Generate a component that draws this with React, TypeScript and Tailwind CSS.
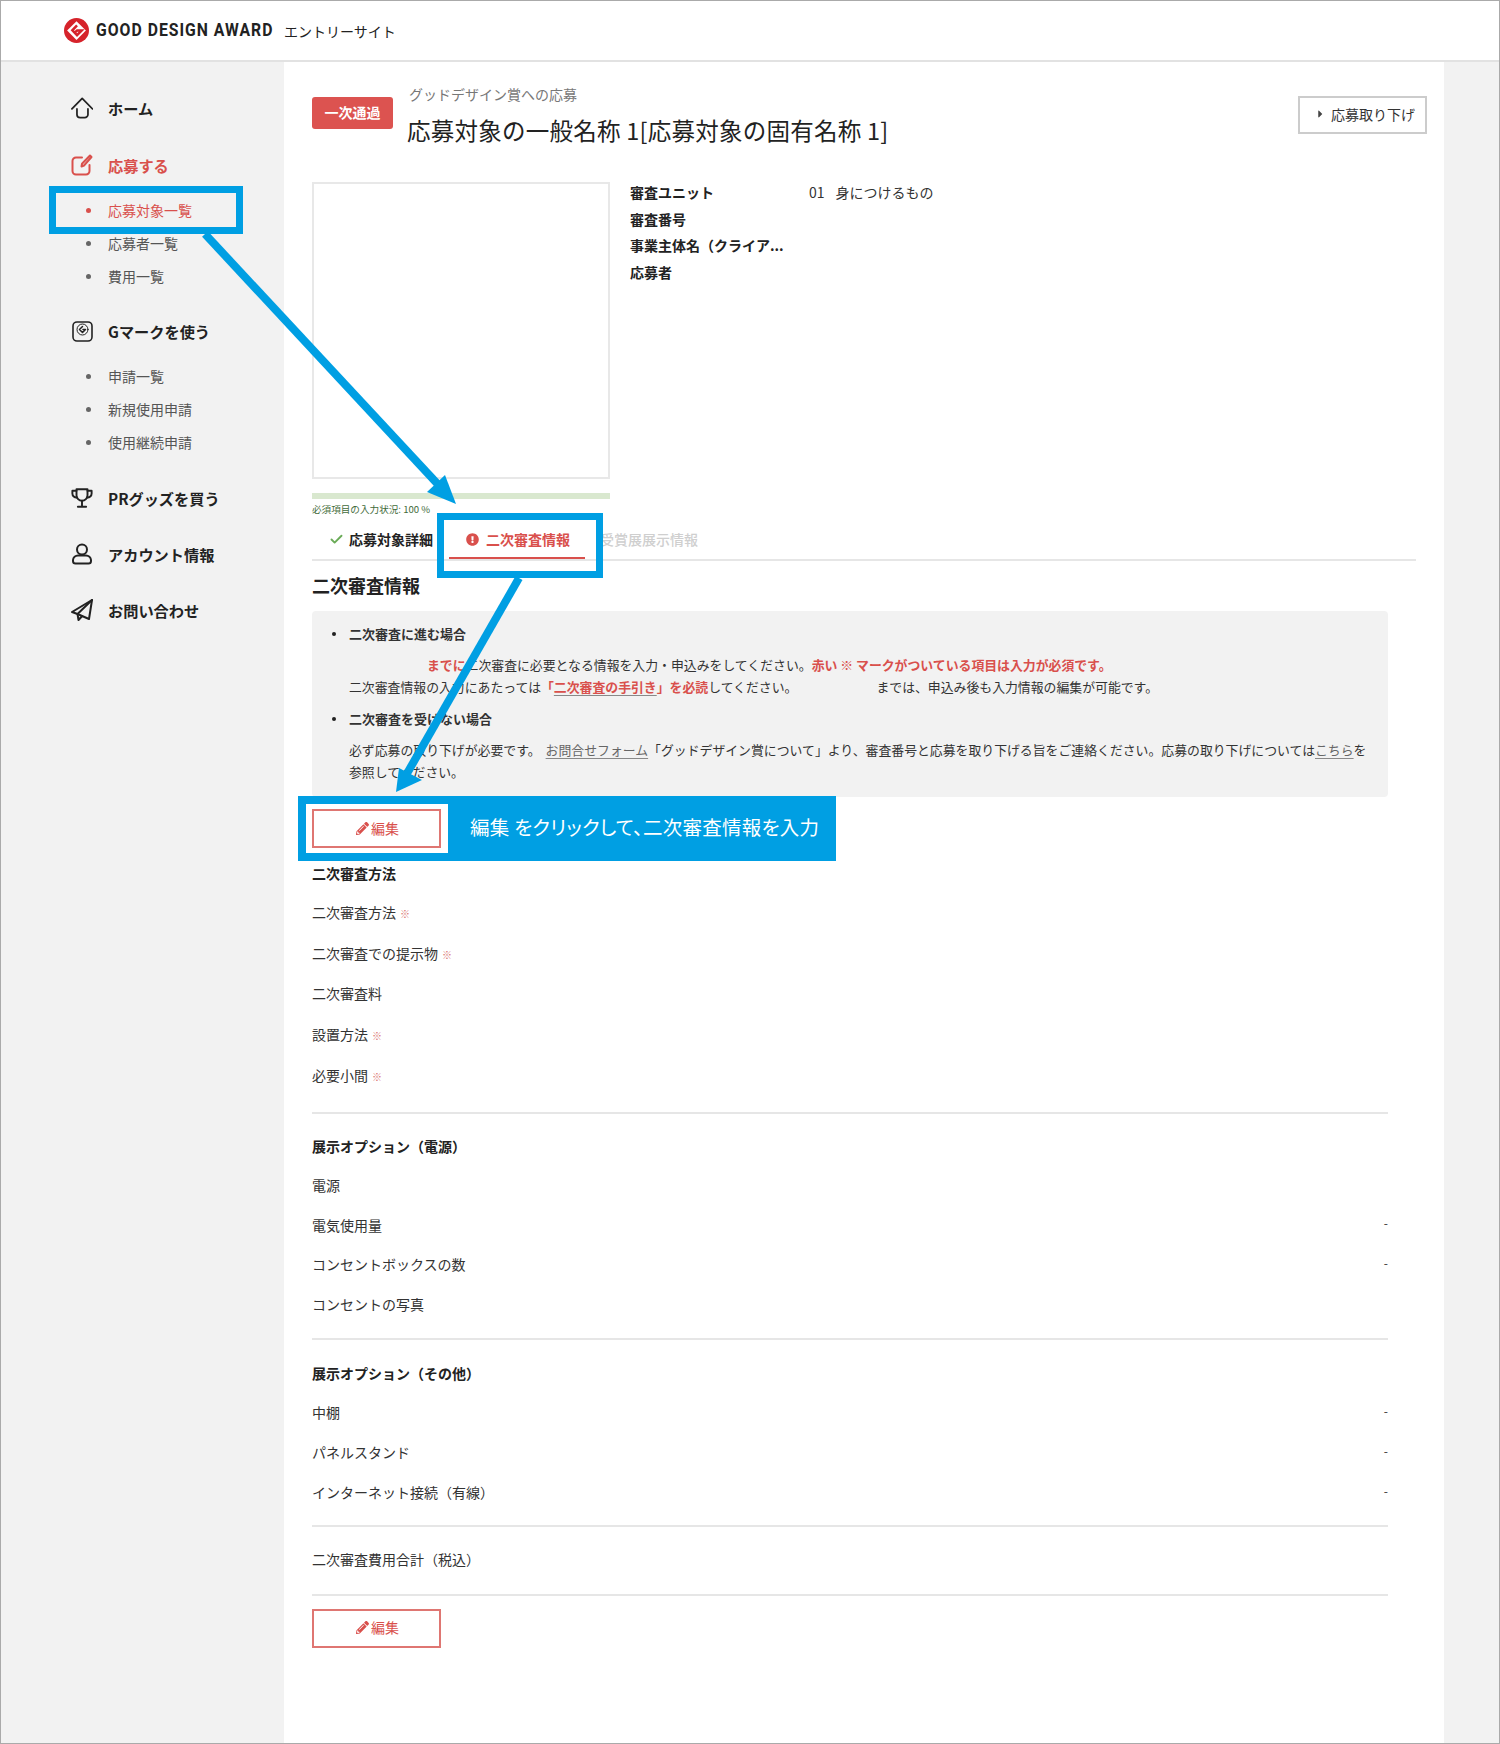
import { Check } from "lucide-react";
import { FaCaretRight, FaExclamationCircle, FaPencilAlt } from "react-icons/fa";

const RED = "text-[#d9504c]";

function LogoMark({ size = 25 }: { size?: number }) {
  return (
    <svg width={size} height={size} viewBox="0 0 24 24">
      <circle cx="12" cy="12" r="12" fill="#d6232b" />
      <path d="M12 3 L21 12 L12 21 L3 12 Z" fill="#fff" />
      <path d="M12.5 7 L8 11.8 L12.5 16.5 L17 12 L12.6 12 L11 13.4" fill="none" stroke="#d6232b" strokeWidth="2.4" />
    </svg>
  );
}

function HomeIcon() {
  return (
    <svg width="24" height="24" viewBox="0 0 24 24" fill="none" stroke="#222" strokeWidth="1.9" strokeLinecap="round" strokeLinejoin="round">
      <path d="M1 13 L12.2 1.5 L23.5 13" />
      <path d="M6.5 13 V19 a3.5 3.5 0 0 0 3.5 3.5 H15 a3.5 3.5 0 0 0 3.5 -3.5 V13" />
    </svg>
  );
}

function EditIcon() {
  return (
    <svg width="22" height="22" viewBox="0 0 22 22" fill="none" stroke="#d9504c" strokeWidth="2" strokeLinecap="round" strokeLinejoin="round">
      <path d="M11 3.5 H5 a3.5 3.5 0 0 0 -3.5 3.5 V17 a3.5 3.5 0 0 0 3.5 3.5 H15 a3.5 3.5 0 0 0 3.5 -3.5 V11" />
      <path d="M19 1.5 L20.5 3 L13 11.5 L10.5 12.5 L11 9.8 Z" />
    </svg>
  );
}

function GmarkIcon() {
  return (
    <svg width="21" height="21" viewBox="0 0 21 21" fill="none" stroke="#222" strokeLinecap="round" strokeLinejoin="round">
      <rect x="1" y="1" width="19" height="19" rx="4" strokeWidth="1.6" />
      <circle cx="10.5" cy="8.5" r="5.5" strokeWidth="1" />
      <path d="M10.5 5.5 L7.5 8.5 L10.5 11.5 L13.5 8.5 L11 8.5" strokeWidth="1.5" />
    </svg>
  );
}

function TrophyIcon() {
  return (
    <svg width="24" height="22" viewBox="0 0 24 22" fill="none" stroke="#222" strokeWidth="2.1" strokeLinecap="round" strokeLinejoin="round">
      <path d="M6 1.5 H18 V8 a6 6 0 0 1 -12 0 Z" />
      <path d="M6 3 H1.5 V6 a4.5 4.5 0 0 0 5 4.5" />
      <path d="M18 3 H22.5 V6 a4.5 4.5 0 0 1 -5 4.5" />
      <path d="M12 14 V20.5 M7.5 20.5 H16.5" />
    </svg>
  );
}

function UserIcon() {
  return (
    <svg width="22" height="22" viewBox="0 0 22 22" fill="none" stroke="#222" strokeWidth="2" strokeLinecap="round" strokeLinejoin="round">
      <circle cx="11" cy="6.5" r="5" />
      <path d="M7 12.5 H15 a5 5 0 0 1 5 4.5 V18 a2.5 2.5 0 0 1 -2.5 2.5 H4.5 A2.5 2.5 0 0 1 2 18 V17 a5 5 0 0 1 5 -4.5 Z" />
    </svg>
  );
}

function PlaneIcon() {
  return (
    <svg width="22" height="22" viewBox="0 0 22 22" fill="none" stroke="#222" strokeWidth="2" strokeLinejoin="round" strokeLinecap="round">
      <path d="M21 1 L1 13 L6.5 15 L18 20 Z" />
      <path d="M21 1 L6.5 15 L7.5 21 L11 17.2" />
    </svg>
  );
}

function SubNav({ items, active, className }: { items: string[]; active?: string; className: string }) {
  return (
    <ul className={className}>
      {items.map((item) => (
        <li key={item} className={`flex h-[33px] items-center pl-[15px] text-[14px] ${item === active ? "text-[#d9504c]" : "text-[#555]"}`}>
          <span className={`mr-[17px] h-[5px] w-[5px] rounded-full ${item === active ? "bg-[#d9504c]" : "bg-[#666]"}`} />
          {item}
        </li>
      ))}
    </ul>
  );
}

function NavItem({ icon, label, className, red }: { icon: React.ReactNode; label: string; className?: string; red?: boolean }) {
  return (
    <div className={`flex h-[32px] items-center text-[15.2px] font-bold ${red ? RED : "text-[#222]"} ${className ?? ""}`}>
      <span className="flex w-[37px] justify-center pr-[15px]">{icon}</span>
      {label}
    </div>
  );
}

function Sidebar() {
  return (
    <aside className="w-[283px] shrink-0 bg-[#f2f2f2] pl-[70px] pt-[30px]">
      <NavItem icon={<HomeIcon />} label="ホーム" />
      <NavItem icon={<EditIcon />} label="応募する" className="mt-[25px]" red />
      <SubNav items={["応募対象一覧", "応募者一覧", "費用一覧"]} active="応募対象一覧" className="mt-[13px]" />
      <NavItem icon={<GmarkIcon />} label="Gマークを使う" className="mt-[22px]" />
      <SubNav items={["申請一覧", "新規使用申請", "使用継続申請"]} className="mt-[13px]" />
      <NavItem icon={<TrophyIcon />} label="PRグッズを買う" className="mt-[23px]" />
      <NavItem icon={<UserIcon />} label="アカウント情報" className="mt-[24px]" />
      <NavItem icon={<PlaneIcon />} label="お問い合わせ" className="mt-[24px]" />
    </aside>
  );
}

function Req() {
  return <span className="ml-[4px] text-[10px] text-[#d9736f]">※</span>;
}

function Row({ label, req, dash, h = "h-[39.5px]" }: { label: string; req?: boolean; dash?: boolean; h?: string }) {
  return (
    <div className={`flex items-center justify-between text-[14px] text-[#333] ${h}`}>
      <span>
        {label}
        {req && <Req />}
      </span>
      {dash && <span className="-mt-[4px] text-[12px]">-</span>}
    </div>
  );
}

function SectionTitle({ children, className }: { children: string; className?: string }) {
  return <h3 className={`h-[24px] text-[14px] font-bold leading-[24px] text-[#222] ${className ?? ""}`}>{children}</h3>;
}

function Divider({ className }: { className: string }) {
  return <hr className={`h-[2px] border-0 bg-[#e6e6e6] ${className}`} />;
}

function EditButton({ className }: { className: string }) {
  return (
    <button className={`relative z-20 flex h-[39px] w-[129px] items-center justify-center gap-[2px] border-2 border-[#df7672] bg-white pb-[1px] pl-[2px] text-[14px] ${RED} ${className}`}>
      <FaPencilAlt className="h-[13px] w-[13px]" />
      編集
    </button>
  );
}

function Notice() {
  return (
    <div className="mt-[13px] h-[186px] w-[1076px] rounded-[4px] bg-[#f2f2f2] pl-[37px] pt-[12px] text-[12.86px] leading-[21.5px] text-[#333]">
      <p className="relative h-[22px] text-[13px] font-bold leading-[22px] before:absolute before:-left-[17px] before:top-[9px] before:h-[4px] before:w-[4px] before:rounded-full before:bg-[#222]">
        二次審査に進む場合
      </p>
      <p className="mt-[9px] whitespace-nowrap">
        <span className={`ml-[78px] font-bold ${RED}`}>までに</span>二次審査に必要となる情報を入力・申込みをしてください。
        <span className={`font-bold ${RED}`}>赤い ※ マークがついている項目は入力が必須です。</span>
        <br />
        二次審査情報の入力にあたっては
        <span className={`font-bold ${RED}`}>
          「<span className="underline decoration-[#888] underline-offset-[3px]">二次審査の手引き</span>」を必読
        </span>
        してください。<span className="ml-[79px]">までは、申込み後も入力情報の編集が可能です。</span>
      </p>
      <p className="relative mt-[11px] h-[22px] text-[13px] font-bold leading-[22px] before:absolute before:-left-[17px] before:top-[9px] before:h-[4px] before:w-[4px] before:rounded-full before:bg-[#222]">
        二次審査を受けない場合
      </p>
      <p className="mt-[9px] whitespace-nowrap">
        必ず応募の取り下げが必要です。
        <span className="ml-[5px] text-[#666] underline decoration-[#888] underline-offset-[3px]">お問合せフォーム</span>
        「グッドデザイン賞について」より、審査番号と応募を取り下げる旨をご連絡ください。応募の取り下げについては
        <span className="text-[#666] underline decoration-[#888] underline-offset-[3px]">こちら</span>を
        <br />
        参照してください。
      </p>
    </div>
  );
}

function Main() {
  return (
    <main className="w-[1160px] shrink-0 bg-white pl-[28px]">
      <div className="flex h-[117px] items-start pt-[22px]">
        <span className="mt-[13px] flex h-[32px] w-[81px] items-center justify-center rounded-[3px] bg-[#dc5350] pb-[1px] text-[14px] font-bold text-white">
          一次通過
        </span>
        <div className="ml-[14px]">
          <p className="h-[20px] pl-[2px] text-[14px] leading-[20px] text-[#777]">グッドデザイン賞への応募</p>
          <h1 className="mt-[10px] h-[32px] text-[23.5px] leading-[32px] tracking-[0.25px] text-[#222]">応募対象の一般名称 1[応募対象の固有名称 1]</h1>
        </div>
        <button className="ml-auto mr-[17px] mt-[12px] flex h-[38px] w-[129px] items-center border-2 border-[#cccccc] pb-[2px] pl-[16px] text-[14px] text-[#333]">
          <FaCaretRight className="mr-[6px] h-[12px] w-[9px] text-[#444]" />
          応募取り下げ
        </button>
      </div>

      <div className="flex">
        <div className="mt-[3px] w-[298px]">
          <div className="h-[297px] border-2 border-[#e8e8e8]" />
          <div className="mt-[14px] h-[6px] bg-[#d9e8cf]" />
          <p className="mt-[3px] h-[15px] text-[9.6px] leading-[14px] text-[#3f6b3a]">必須項目の入力状況: 100 %</p>
        </div>
        <dl className="ml-[20px] text-[14px] leading-[26.7px] text-[#222]">
          {[
            ["審査ユニット", "01", "身につけるもの"],
            ["審査番号", "", ""],
            ["事業主体名（クライア...", "", ""],
            ["応募者", "", ""],
          ].map(([term, code, value]) => (
            <div key={term} className="flex h-[26.7px]">
              <dt className="w-[179px] font-bold">{term}</dt>
              <dd className="text-[#333]">
                {code}
                {value && <span className="ml-[11px]">{value}</span>}
              </dd>
            </div>
          ))}
        </dl>
      </div>

      <div className="flex h-[44px] w-[1104px] items-center border-b-2 border-[#e6e6e6] pl-[17px] pt-[2px] text-[14px] font-bold">
        <Check className="mr-[5px] h-[15px] w-[15px] text-[#6aab57]" strokeWidth={3} />
        <span className="text-[#222]">応募対象詳細</span>
        <div className={`relative ml-[16px] flex h-[40px] w-[136px] items-center pl-[17px] ${RED} after:absolute after:bottom-0 after:left-0 after:h-[2px] after:w-full after:bg-[#d9504c]`}>
          <FaExclamationCircle className="mr-[7px] h-[13px] w-[13px]" />
          二次審査情報
        </div>
        <span className="ml-[15px] font-medium text-[#cfcfcf]">受賞展展示情報</span>
      </div>

      <h2 className="mt-[11px] h-[26px] text-[18px] font-bold leading-[26px] text-[#222]">二次審査情報</h2>

      <Notice />

      <EditButton className="mt-[12px]" />

      <div className="w-[1076px]">
        <SectionTitle className="mt-[13px]">二次審査方法</SectionTitle>
        <div className="mt-[7px]">
          <Row label="二次審査方法" req h="h-[40.75px]" />
          <Row label="二次審査での提示物" req h="h-[40.75px]" />
          <Row label="二次審査料" h="h-[40.75px]" />
          <Row label="設置方法" req h="h-[40.75px]" />
          <Row label="必要小間" req h="h-[40.75px]" />
        </div>
        <Divider className="mt-[16px]" />

        <SectionTitle className="mt-[20px]">展示オプション（電源）</SectionTitle>
        <div className="mt-[8px]">
          <Row label="電源" />
          <Row label="電気使用量" dash />
          <Row label="コンセントボックスの数" dash />
          <Row label="コンセントの写真" />
        </div>
        <Divider className="mt-[14px]" />

        <SectionTitle className="mt-[21px]">展示オプション（その他）</SectionTitle>
        <div className="mt-[8px]">
          <Row label="中棚" dash h="h-[40px]" />
          <Row label="パネルスタンド" dash h="h-[40px]" />
          <Row label="インターネット接続（有線）" dash h="h-[40px]" />
        </div>
        <Divider className="mt-[12px]" />

        <div className="mt-[20px] h-[24px] text-[14px] leading-[24px] text-[#333]">二次審査費用合計（税込）</div>
        <Divider className="mt-[23px]" />
      </div>

      <EditButton className="mt-[13px]" />
    </main>
  );
}

function Annotations() {
  return (
    <>
      <div className="absolute left-[48px] top-[185px] z-10 h-[48px] w-[194px] border-[7px] border-[#009fe3]" />
      <div className="absolute left-[436px] top-[512px] z-10 h-[65px] w-[166px] border-[7px] border-[#009fe3]" />
      <svg className="absolute left-0 top-0 z-10" width="1498" height="1742" fill="none">
        <line x1="204" y1="233" x2="445" y2="492" stroke="#009fe3" strokeWidth="8" />
        <path d="M455 503 L444 474 L426 491 Z" fill="#009fe3" />
        <line x1="518" y1="577" x2="404" y2="776" stroke="#009fe3" strokeWidth="8" />
        <path d="M395 791 L398 767 L421 779 Z" fill="#009fe3" />
      </svg>
      <div className="absolute left-[297px] top-[795px] z-10 flex h-[65px] w-[538px] items-center whitespace-nowrap bg-[#009fe3] pb-[4px] pl-[172px] text-[19.5px] tracking-[0.25px] text-white [font-feature-settings:'palt']">
        <span className="absolute left-[8px] top-[8px] h-[49px] w-[142px] bg-white" />
        編集 をクリックして、二次審査情報を入力
      </div>
    </>
  );
}

export default function App() {
  return (
    <div className="relative flex h-[1744px] w-[1500px] flex-col border border-[#aaa] bg-[#f2f2f2] font-['Noto_Sans_CJK_JP','Noto_Sans',sans-serif]">
      <header className="flex h-[61px] shrink-0 items-center border-b-2 border-[#e2e2e2] bg-white pl-[63px]">
        <LogoMark />
        <span className="ml-[7px] w-[177px] origin-left scale-x-[0.83] whitespace-nowrap font-['Roboto',sans-serif] text-[19px] font-bold tracking-[1.2px] text-[#222]">
          GOOD DESIGN AWARD
        </span>
        <span className="ml-[11px] mt-[2px] text-[14px] text-[#222]">エントリーサイト</span>
      </header>
      <div className="flex flex-1">
        <Sidebar />
        <Main />
      </div>
      <Annotations />
    </div>
  );
}
